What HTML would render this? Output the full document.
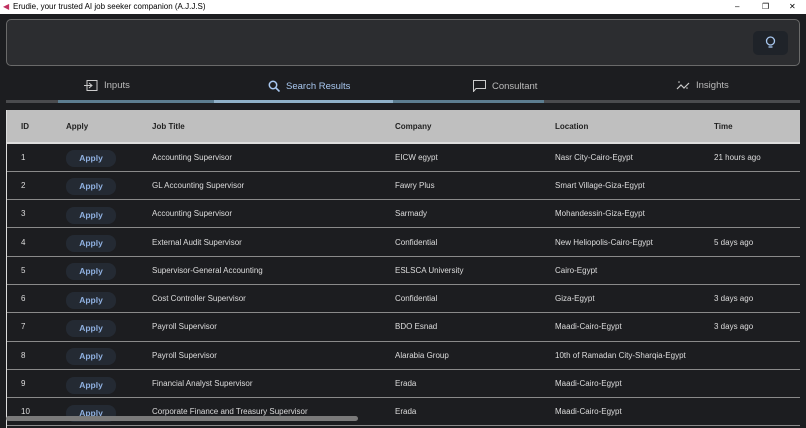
<!DOCTYPE html><html><head><style>
*{margin:0;padding:0;box-sizing:border-box}
body{width:806px;height:428px;overflow:hidden;background:#1c1d20;font-family:"Liberation Sans",sans-serif;position:relative;color:#e6e6e6}
.tb{position:absolute;left:0;top:0;width:806px;height:14px;background:#fff;color:#000;font-size:8px;line-height:13px}
.hdr{position:absolute;left:6px;top:19px;width:794px;height:47px;border:1px solid #6a6a6a;border-radius:5px;background:#2c2d30}
.bulb{position:absolute;left:753px;top:31px;width:35px;height:24px;border-radius:5px;background:#1f2329}
.tab{position:absolute;top:80px;font-size:9.5px;color:#bbb;display:flex;align-items:center;gap:6px}
.bar{position:absolute;top:100px;height:3px}
table{position:absolute;left:6px;top:110px;width:794px;border-collapse:collapse;font-size:8px;table-layout:fixed}
th{background:#bfbfbf;color:#222;text-align:left;font-weight:bold;height:33px;border-bottom:2px solid #ddd}
td{height:28.3px;border-bottom:1.5px solid #8a8a8a;color:#ddd}
.ap{display:inline-block;width:50px;height:17px;border-radius:8px;background:#242a33;color:#8fb0e0;font-size:8.5px;font-weight:bold;text-align:center;line-height:17px;margin-top:3px}
</style></head><body>
<div class="tb"><span style="color:#c03060;position:absolute;left:3px">◀</span><span style="position:absolute;left:13px">Erudie, your trusted AI job seeker companion (A.J.J.S)</span><span style="position:absolute;left:735px">–</span><span style="position:absolute;left:762px">❐</span><span style="position:absolute;left:789px">✕</span></div>
<div class="hdr"></div>
<div class="bulb"><svg width="35" height="24"><circle cx="17.5" cy="10" r="4" fill="none" stroke="#a9c8f0" stroke-width="1.3"/><line x1="15.5" y1="16" x2="19.5" y2="16" stroke="#a9c8f0" stroke-width="1.3"/></svg></div>
<div class="tab" style="left:84px"><svg width="14" height="11"><rect x="3" y="0.5" width="10" height="10" fill="none" stroke="#ccc"/><path d="M0 5.5h8M5 3l3 2.5-3 2.5" fill="none" stroke="#ccc"/></svg>Inputs</div>
<div class="tab" style="left:268px;color:#a9c8f0"><svg width="12" height="12"><circle cx="5" cy="5" r="3.7" fill="none" stroke="#a9c8f0" stroke-width="1.5"/><path d="M8 8l3.5 3.5" stroke="#a9c8f0" stroke-width="1.6"/></svg>Search Results</div>
<div class="tab" style="left:473px"><svg width="13" height="12"><path d="M0.5 0.5h12v8H3l-2.5 3z" fill="none" stroke="#ccc"/></svg>Consultant</div>
<div class="tab" style="left:676px"><svg width="14" height="11"><path d="M1 9l4-4 3 3 5-5" fill="none" stroke="#ccc" stroke-width="1.2"/><circle cx="3" cy="2" r=".8" fill="#ccc"/><circle cx="11" cy="8" r=".8" fill="#ccc"/></svg>Insights</div>
<div class="bar" style="left:6px;width:52px;background:#4a4b4e"></div>
<div class="bar" style="left:58px;width:486px;background:#5c7d90"></div>
<div class="bar" style="left:214px;width:179px;background:#8fb0c8"></div>
<div class="bar" style="left:544px;width:256px;background:#4a4b4e"></div>
<table>
<colgroup><col style="width:60px"><col style="width:86px"><col style="width:243px"><col style="width:160px"><col style="width:159px"><col></colgroup>
<tr><th style="padding-left:15px">ID</th><th>Apply</th><th>Job Title</th><th>Company</th><th>Location</th><th>Time</th></tr>
<tr><td style="padding-left:15px">1</td><td><span class="ap">Apply</span></td><td>Accounting Supervisor</td><td>EICW egypt</td><td>Nasr City-Cairo-Egypt</td><td>21 hours ago</td></tr>
<tr><td style="padding-left:15px">2</td><td><span class="ap">Apply</span></td><td>GL Accounting Supervisor</td><td>Fawry Plus</td><td>Smart Village-Giza-Egypt</td><td></td></tr>
<tr><td style="padding-left:15px">3</td><td><span class="ap">Apply</span></td><td>Accounting Supervisor</td><td>Sarmady</td><td>Mohandessin-Giza-Egypt</td><td></td></tr>
<tr><td style="padding-left:15px">4</td><td><span class="ap">Apply</span></td><td>External Audit Supervisor</td><td>Confidential</td><td>New Heliopolis-Cairo-Egypt</td><td>5 days ago</td></tr>
<tr><td style="padding-left:15px">5</td><td><span class="ap">Apply</span></td><td>Supervisor-General Accounting</td><td>ESLSCA University</td><td>Cairo-Egypt</td><td></td></tr>
<tr><td style="padding-left:15px">6</td><td><span class="ap">Apply</span></td><td>Cost Controller Supervisor</td><td>Confidential</td><td>Giza-Egypt</td><td>3 days ago</td></tr>
<tr><td style="padding-left:15px">7</td><td><span class="ap">Apply</span></td><td>Payroll Supervisor</td><td>BDO Esnad</td><td>Maadi-Cairo-Egypt</td><td>3 days ago</td></tr>
<tr><td style="padding-left:15px">8</td><td><span class="ap">Apply</span></td><td>Payroll Supervisor</td><td>Alarabia Group</td><td>10th of Ramadan City-Sharqia-Egypt</td><td></td></tr>
<tr><td style="padding-left:15px">9</td><td><span class="ap">Apply</span></td><td>Financial Analyst Supervisor</td><td>Erada</td><td>Maadi-Cairo-Egypt</td><td></td></tr>
<tr><td style="padding-left:15px">10</td><td><span class="ap">Apply</span></td><td>Corporate Finance and Treasury Supervisor</td><td>Erada</td><td>Maadi-Cairo-Egypt</td><td></td></tr>
</table>
<div style="position:absolute;left:6px;top:110px;width:1px;height:318px;background:#ddd"></div>
<div style="position:absolute;left:6px;top:416px;width:352px;height:5px;border-radius:3px;background:#7a7a7a"></div>
</body></html>
